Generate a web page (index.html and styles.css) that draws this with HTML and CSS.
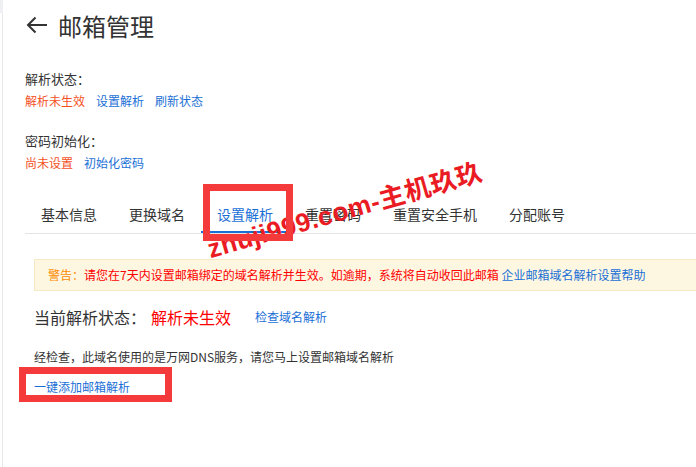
FILE: index.html
```html
<!DOCTYPE html>
<html lang="zh-CN">
<head>
    <meta charset="UTF-8">
    <meta name="viewport" content="width=device-width, initial-scale=1.0">
    <title>邮箱管理</title>
    <link rel="stylesheet" href="styles.css">
</head>
<body>
    <div class="corner"></div>
    <div class="page">
        <header class="head">
            <svg class="back" width="22" height="18" viewBox="0 0 22 18">
                <path d="M21 9H2M9.5 1.5L2 9l7.5 7.5" fill="none" stroke="#333" stroke-width="2"/>
            </svg>
            <h1>邮箱管理</h1>
        </header>

        <section class="field">
            <div class="field-label">解析状态：</div>
            <div class="field-links">
                <span class="warn">解析未生效</span>
                <a href="#">设置解析</a>
                <a href="#">刷新状态</a>
            </div>
        </section>

        <section class="field field-second">
            <div class="field-label">密码初始化：</div>
            <div class="field-links">
                <span class="warn">尚未设置</span>
                <a href="#">初始化密码</a>
            </div>
        </section>

        <nav class="tabs">
            <span class="tab">基本信息</span>
            <span class="tab">更换域名</span>
            <span class="tab active">设置解析</span>
            <span class="tab">重置密码</span>
            <span class="tab">重置安全手机</span>
            <span class="tab">分配账号</span>
        </nav>

        <div class="panel">
            <div class="alert">
                <span class="alert-title">警告：</span><span class="alert-text">请您在7天内设置邮箱绑定的域名解析并生效。如逾期，系统将自动收回此邮箱</span>
                <a href="#">企业邮箱域名解析设置帮助</a>
            </div>
            <div class="status">
                <span class="status-label">当前解析状态：</span>
                <span class="status-value">解析未生效</span>
                <a href="#">检查域名解析</a>
            </div>
            <p class="note">经检查，此域名使用的是万网DNS服务，请您马上设置邮箱域名解析</p>
            <a href="#" class="oneclick">一键添加邮箱解析</a>
        </div>
    </div>

    <div class="mark">zhuji999.com-主机玖玖</div>
    <div class="hl hl-tab"></div>
    <div class="hl hl-btn"></div>
</body>
</html>
```

FILE: styles.css
```css
body {
    margin: 0;
    background: #fff;
    color: #333;
    font-family: "Noto Sans CJK SC", "Liberation Sans", sans-serif;
    overflow: hidden;
}
a {
    color: #1a6fd6;
    text-decoration: none;
}
.corner {
    position: absolute;
    left: 0;
    top: 0;
    width: 3px;
    height: 13px;
    background: #eef0f3;
}
.page {
    margin-left: 2px;
    border-left: 1px solid #e8e8e8;
    padding-left: 22px;
    min-height: 467px;
}
.head {
    display: flex;
    align-items: center;
    padding-top: 12px;
    height: 28px;
}
.back {
    margin-left: 1px;
    margin-right: 10px;
    margin-top: -3px;
}
.head h1 {
    margin: 0;
    font-size: 24px;
    font-weight: 400;
    line-height: 28px;
    color: #333;
}
.field {
    margin-top: 29px;
}
.field-second {
    margin-top: 20px;
}
.field-label {
    font-size: 13px;
    line-height: 20px;
}
.field-links {
    display: flex;
    gap: 11px;
    margin-top: 2px;
    font-size: 12px;
    line-height: 20px;
}
.warn {
    color: #f4511e;
}
.tabs {
    display: flex;
    margin-top: 31px;
    border-bottom: 1px solid #e4e4e4;
}
.tab {
    padding: 0 16px 7px;
    font-size: 14px;
    line-height: 20px;
    border-bottom: 2px solid transparent;
    color: #333;
}
.tab.active {
    color: #1a6fd6;
    border-bottom-color: #1a6fd6;
}
.panel {
    padding-left: 9px;
}
.alert {
    margin-top: 25px;
    padding: 5px 13px;
    background: #fdf7e2;
    border: 1px solid #f8e9c6;
    border-right: none;
    font-size: 12px;
    line-height: 20px;
    white-space: nowrap;
}
.alert-title {
    color: #ff8a00;
}
.alert-text {
    color: #f00;
}
.status {
    display: flex;
    align-items: center;
    margin-top: 14px;
    line-height: 24px;
}
.status-label {
    font-size: 16px;
}
.status-value {
    font-size: 16px;
    color: #f00;
    margin-left: 5px;
}
.status a {
    font-size: 12px;
    margin-left: 24px;
}
.note {
    margin: 18px 0 0;
    font-size: 12px;
    line-height: 20px;
}
.oneclick {
    display: inline-block;
    margin-top: 10px;
    font-size: 12px;
    line-height: 20px;
}
.mark {
    position: absolute;
    left: 344px;
    top: 208px;
    transform: translate(-50%, -50%) rotate(-16deg);
    color: #ea1b23;
    font-family: "Liberation Sans", "Noto Sans CJK SC", sans-serif;
    font-weight: 700;
    font-size: 26px;
    white-space: nowrap;
    letter-spacing: 0.5px;
}
.hl {
    position: absolute;
    border: 7px solid #f43a3a;
    box-sizing: border-box;
}
.hl-tab {
    left: 203px;
    top: 184px;
    width: 90px;
    height: 57px;
}
.hl-btn {
    left: 19px;
    top: 367px;
    width: 153px;
    height: 35px;
}
```
